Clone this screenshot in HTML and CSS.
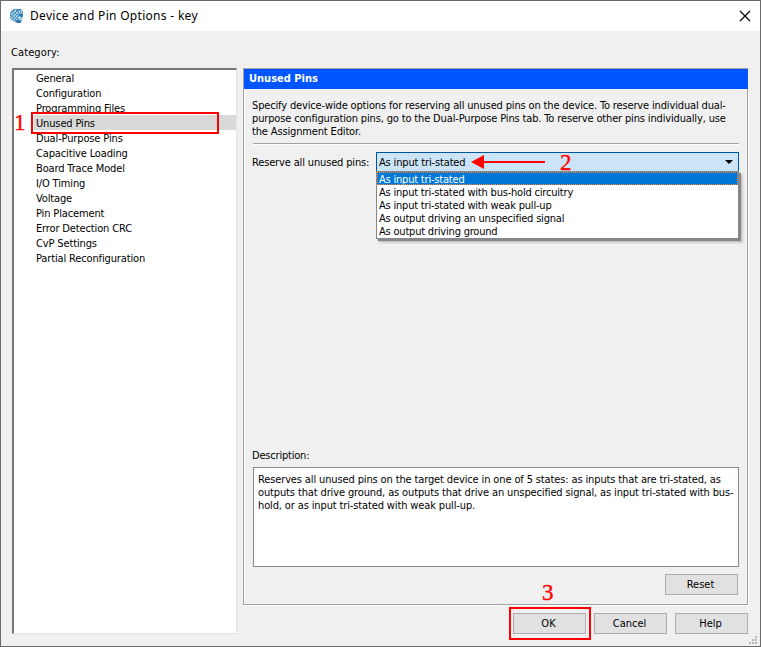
FILE: index.html
```html
<!DOCTYPE html>
<html lang="en">
<head>
<meta charset="utf-8">
<title>Device and Pin Options - key</title>
<link rel="stylesheet" href="styles.css">
</head>
<body>
<div class="dialog">
  <header class="titlebar">
    <svg class="app-icon" width="16" height="16" viewBox="0 0 16 16">
      <path d="M5 1H9L10 4V10L12 15H9L4 13L1 10V5L3 2Z" fill="#4b91bf"/>
      <path d="M2 5L8 12M3 3L10 11M5 2L10 7M1 8L6 13M7 2L2 7M9 4L3 10M9 7L5 12" stroke="#b8dcef" stroke-width=".8"/>
      <path d="M9 1L12 1L14 4V8L13 10L10 8Z" fill="#2b79b0"/>
      <path d="M10 2L11 6M12 2L13 6" stroke="#d8ecf6"/>
      <path d="M9 9L14 10L13 12H10Z" fill="#a6cce0"/>
      <path d="M7 13L13 12L11 15H8Z" fill="#2873aa"/>
    </svg>
    <h1 class="title">Device and Pin Options - key</h1>
    <svg class="close" width="12" height="12" viewBox="0 0 12 12"><path d="M1 1L11 11M11 1L1 11" stroke="#000" stroke-width="1.2"/></svg>
  </header>
  <div class="category-label">Category:</div>
  <main class="columns">
    <ul class="tree">
      <li>General</li>
      <li>Configuration</li>
      <li>Programming Files</li>
      <li class="selected">Unused Pins<span class="mark mark-row"></span><span class="step step-1">1</span></li>
      <li>Dual-Purpose Pins</li>
      <li>Capacitive Loading</li>
      <li>Board Trace Model</li>
      <li>I/O Timing</li>
      <li>Voltage</li>
      <li>Pin Placement</li>
      <li>Error Detection CRC</li>
      <li>CvP Settings</li>
      <li>Partial Reconfiguration</li>
    </ul>
    <section class="panel">
      <h2 class="panel-title">Unused Pins</h2>
      <div class="panel-body">
        <p class="intro">Specify device-wide options for reserving all unused pins on the device. To reserve individual dual-<br>purpose configuration pins, go to the Dual-Purpose Pins tab. To reserve other pins individually, use<br>the Assignment Editor.</p>
        <div class="rule"></div>
        <div class="field">
          <span class="field-label">Reserve all unused pins:</span>
          <div class="combo">
            <span>As input tri-stated</span>
            <svg class="caret" width="8" height="4" viewBox="0 0 8 4"><path d="M0 0H8L4 4Z"/></svg>
            <svg class="arrow" width="76" height="16" viewBox="0 0 76 16"><path d="M0 8L13 1V15Z" fill="#f00"/><path d="M12 8H74" stroke="#f00" stroke-width="2"/></svg>
            <span class="step step-2">2</span>
            <ul class="options">
              <li class="current">As input tri-stated</li>
              <li>As input tri-stated with bus-hold circuitry</li>
              <li>As input tri-stated with weak pull-up</li>
              <li>As output driving an unspecified signal</li>
              <li>As output driving ground</li>
            </ul>
          </div>
        </div>
        <div class="desc-label">Description:</div>
        <div class="desc">Reserves all unused pins on the target device in one of 5 states: as inputs that are tri-stated, as<br>outputs that drive ground, as outputs that drive an unspecified signal, as input tri-stated with bus-<br>hold, or as input tri-stated with weak pull-up.</div>
        <div class="reset-row"><button class="btn">Reset</button></div>
      </div>
    </section>
  </main>
  <footer class="actions">
    <div class="ok-wrap"><button class="btn">OK</button><span class="mark mark-ok"></span><span class="step step-3">3</span></div>
    <button class="btn">Cancel</button>
    <button class="btn">Help</button>
  </footer>
  <svg class="grip" width="8" height="8" viewBox="0 0 8 8" fill="#b8b8b8"><path d="M6 0h2v2H6zM3 3h2v2H3zM6 3h2v2H6zM0 6h2v2H0zM3 6h2v2H3zM6 6h2v2H6z"/></svg>
</div>
</body>
</html>
```
FILE: styles.css
```css
* { box-sizing: border-box; }
body { margin: 0; }
ul, p, h1, h2 { margin: 0; padding: 0; list-style: none; }
.dialog {
  position: relative;
  width: 761px;
  height: 647px;
  overflow: hidden;
  border: 1px solid #6b6b6b;
  background: #f0f0f0;
  color: #000;
  font: 11px/13px "DejaVu Sans Condensed", "DejaVu Sans", sans-serif;
  font-stretch: condensed;
  letter-spacing: -0.2px;
  white-space: nowrap;
}
.titlebar {
  display: flex;
  align-items: center;
  height: 30px;
  padding: 0 9px 0 8px;
  background: #fff;
}
.app-icon { flex: none; }
.title {
  flex: 1;
  margin-left: 5px;
  font: 12px/18px "Noto Sans", sans-serif;
  letter-spacing: 0.3px;
}
.category-label { padding: 15px 0 0 10px; height: 37px; letter-spacing: 0.1px; }
.columns {
  display: flex;
  gap: 6px;
  height: 537px;
  padding-left: 11px;
}
.tree {
  width: 225px;
  height: 566px;
  border: 1px solid #e3e3e3;
  border-top: 2px solid #777;
  border-left: 2px solid #777;
  background: #fff;
  letter-spacing: -0.14px;
  line-height: 17px;
}
.tree li { height: 15px; padding-left: 2px; margin-left: 20px; }
.tree .selected { position: relative; background: #d9d9d9; }
.mark { position: absolute; border: 2px solid #f00; }
.mark-row { left: -3px; top: -3px; width: 188px; height: 22px; }
.step {
  position: absolute;
  color: #f00;
  font: 23px/22px "Liberation Serif", serif;
  letter-spacing: 0;
  -webkit-text-stroke: 0.4px #f00;
}
.step-1 { left: -20px; top: -3px; }
.step-2 { left: 183px; top: -1px; }
.step-3 { left: 29px; top: -31px; }
.panel {
  width: 505px;
  height: 537px;
  border: 1px solid #a0a0a0;
  box-shadow: 1px 1px #fff, inset 1px 1px #fff;
}
.panel-title {
  height: 20px;
  margin-right: -1px;
  padding-left: 5px;
  background: #05f;
  color: #fff;
  font-size: 11px;
  font-weight: bold;
  letter-spacing: 0;
  line-height: 20px;
}
.panel-body { padding: 10px 8px 0 9px; }
.intro { height: 44px; margin-left: -1px; letter-spacing: -0.15px; }
.rule { height: 2px; border-top: 1px solid #a0a0a0; border-bottom: 1px solid #fff; }
.field { display: flex; align-items: center; height: 20px; margin-top: 7px; }
.field-label { width: 124px; margin-left: -1px; letter-spacing: -0.15px; }
.combo {
  position: relative;
  display: flex;
  align-items: center;
  justify-content: space-between;
  width: 363px;
  height: 20px;
  padding: 0 5px 0 2px;
  border: 1px solid #005499;
  background: #cce4f7;
  letter-spacing: -0.15px;
}
.arrow { position: absolute; left: 94px; top: 1px; }
.options {
  position: absolute;
  left: -1px;
  top: 18px;
  width: 363px;
  height: 68px;
  border: 1px solid #828790;
  background: #fff;
  box-shadow: 2px 2px 1px #888, 4px 4px 2px rgba(0, 0, 0, .15);
  letter-spacing: -0.2px;
  line-height: 15px;
  z-index: 1;
}
.options li { height: 13px; padding-left: 2px; }
.options .current {
  background: #0078d7;
  color: #fff;
  outline: 1px dotted #ff8728;
  outline-offset: -1px;
}
.desc-label { height: 19px; margin: 276px 0 0 -1px; padding-top: 1px; letter-spacing: -0.2px; }
.desc {
  height: 100px;
  padding: 5px 0 0 4px;
  border: 1px solid #828790;
  background: #fff;
  letter-spacing: -0.13px;
}
.reset-row { display: flex; justify-content: flex-end; padding: 7px 1px 0 0; }
.btn {
  width: 73px;
  height: 21px;
  padding: 0 2px 0 0;
  border: 1px solid #adadad;
  border-radius: 0;
  background: #e1e1e1;
  color: #000;
  font: inherit;
  letter-spacing: 0;
}
.actions {
  display: flex;
  justify-content: flex-end;
  gap: 8px;
  padding: 8px 12px 0 0;
}
.ok-wrap { position: relative; height: 21px; }
.mark-ok { left: -4px; top: -6px; width: 82px; height: 33px; }
.grip { position: absolute; right: 3px; bottom: 2px; }
```
